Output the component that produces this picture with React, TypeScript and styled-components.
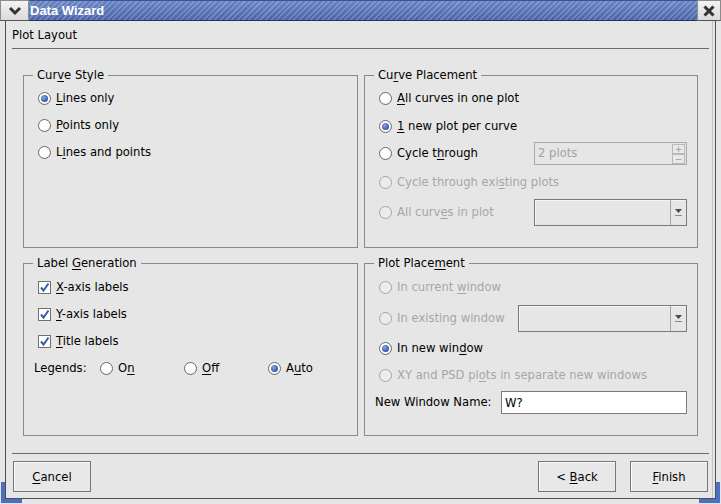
import React from 'react';
import styled, { createGlobalStyle } from 'styled-components';

const Global = createGlobalStyle`
  html, body { margin: 0; padding: 0; background: #e6e6e6; }
  body {
    font-family: "DejaVu Sans", "Bitstream Vera Sans", sans-serif;
    font-size: 11.6px;
    color: #000;
  }
  #root { width: 721px; height: 504px; }
  u { text-underline-offset: 2px; }
`;

const Window = styled.div`
  position: relative;
  width: 721px;
  height: 504px;
  display: flex;
  flex-direction: column;
  background: #e6e6e6;
  overflow: hidden;
`;

const TitleBar = styled.div`
  display: flex;
  height: 21px;
  flex: none;
`;

const TitleButton = styled.div<{ $w: number }>`
  width: ${p => p.$w}px;
  box-sizing: border-box;
  display: flex;
  align-items: center;
  justify-content: center;
  background: linear-gradient(#f3f3f3, #dadada);
  border: 1px solid #8c8c8c;
  border-bottom-color: #555;
`;

const TitleStripe = styled.div`
  flex: 1;
  display: flex;
  align-items: center;
  box-sizing: border-box;
  padding-left: 1px;
  color: #fff;
  font-family: "Liberation Sans", Arial, sans-serif;
  font-weight: bold;
  font-size: 13px;
  background:
    repeating-linear-gradient(135deg, rgba(255,255,255,0.2) 0 1.5px, rgba(255,255,255,0) 1.5px 4px),
    linear-gradient(#6a85c4, #4964a9);
  border-top: 1px solid #3b5391;
  border-bottom: 1px solid #22345f;
`;

const Frame = styled.div`
  flex: 1;
  display: flex;
  min-height: 0;
  padding: 0 5px 5px 5px;
`;

const Client = styled.div`
  flex: 1;
  display: flex;
  flex-direction: column;
  border: 1px solid #4f4f4f;
  border-top: none;
  box-shadow: inset -2px 0 0 #e6e6e6, inset -3px 0 0 #c4c4c4;
`;

const PageTitle = styled.div`
  margin: 7px 0 0 6px;
  line-height: 15px;
  height: 15px;
`;

const Separator = styled.div<{ $mt: number }>`
  margin: ${p => p.$mt}px 6px 0 6px;
  height: 1px;
  background: #6b6b6b;
  flex: none;
`;

const GroupsGrid = styled.div`
  margin: 26px 17px 0 17px;
  display: grid;
  grid-template-columns: 335px 334px;
  grid-template-rows: 173px 173px;
  column-gap: 6px;
  row-gap: 15px;
`;

const Group = styled.div`
  border: 1px solid #8a8a8a;
  display: flex;
  flex-direction: column;
  min-width: 0;
`;

const GroupTitle = styled.div`
  align-self: flex-start;
  margin: -8px 0 0 9px;
  padding: 0 4px;
  height: 15px;
  line-height: 15px;
  background: #e6e6e6;
`;

const Rows = styled.div<{ $pt: number }>`
  display: flex;
  flex-direction: column;
  padding-top: ${p => p.$pt}px;
`;

const Row = styled.div<{ $h: number; $pl?: number }>`
  display: flex;
  align-items: center;
  height: ${p => p.$h}px;
  padding-left: ${p => p.$pl ?? 14}px;
  padding-right: 10px;
`;

const Option = styled.div<{ $disabled?: boolean }>`
  display: flex;
  align-items: center;
  gap: 5px;
  line-height: 15px;
  white-space: nowrap;
  color: ${p => (p.$disabled ? '#a6a6a6' : '#000')};
`;

const RadioDot = styled.span<{ $checked?: boolean; $disabled?: boolean }>`
  flex: none;
  width: 13px;
  height: 13px;
  box-sizing: border-box;
  border-radius: 50%;
  border: 1px solid ${p => (p.$disabled ? '#a4a4a4' : '#6a6a6a')};
  background: ${p => (p.$disabled ? '#ececec' : 'radial-gradient(circle at 40% 35%, #ffffff 55%, #e2e2e2)')};
  display: flex;
  align-items: center;
  justify-content: center;
  &::after {
    content: '';
    display: ${p => (p.$checked ? 'block' : 'none')};
    width: 7px;
    height: 7px;
    border-radius: 50%;
    background: radial-gradient(circle at 38% 35%, #8ba6e6, #3556a8 70%, #22408a);
  }
`;

const CheckBox = styled.span`
  flex: none;
  width: 13px;
  height: 13px;
  box-sizing: border-box;
  border: 1px solid #707070;
  background: #fff;
  display: flex;
  align-items: center;
  justify-content: center;
`;

const LegendRow = styled.div`
  display: grid;
  grid-template-columns: 66px 84px 84px auto;
  align-items: center;
  height: 27px;
  padding-left: 10px;
`;

const FieldLabel = styled.span`
  line-height: 15px;
  white-space: nowrap;
`;

const SpinBox = styled.div`
  margin-left: auto;
  width: 153px;
  height: 23px;
  box-sizing: border-box;
  border: 1px solid #a9a9a9;
  background: #e6e6e6;
  display: flex;
  align-items: stretch;
`;

const SpinText = styled.div`
  flex: 1;
  padding-left: 3px;
  line-height: 21px;
  color: #a3a3a3;
`;

const SpinButtons = styled.div`
  width: 13px;
  display: flex;
  flex-direction: column;
  margin: 1px 1px 1px 0;
`;

const SpinButton = styled.div`
  flex: 1;
  box-sizing: border-box;
  border: 1px solid #b8b8b8;
  background: #e9e9e9;
  color: #9a9a9a;
  font-size: 9px;
  line-height: 8px;
  text-align: center;
`;

const Combo = styled.div<{ $w: number }>`
  margin-left: auto;
  width: ${p => p.$w}px;
  height: 27px;
  box-sizing: border-box;
  border: 1px solid #7a7a7a;
  background: #e6e6e6;
  display: flex;
  box-shadow: inset 1px 1px 0 #f4f4f4;
`;

const ComboField = styled.div`
  flex: 1;
`;

const ComboButton = styled.div`
  width: 15px;
  border-left: 1px solid #a5a5a5;
  display: flex;
  align-items: center;
  justify-content: center;
`;

const TextField = styled.input`
  margin-left: auto;
  width: 186px;
  height: 23px;
  box-sizing: border-box;
  border: 1px solid #7a7a7a;
  background: #fff;
  padding: 0 0 0 3px;
  font-family: "DejaVu Sans", sans-serif;
  font-size: 11.6px;
  color: #000;
  outline: none;
`;

const ButtonRow = styled.div`
  margin-top: 7px;
  height: 31px;
  display: flex;
  gap: 14px;
  padding: 0 7px;
  flex: none;
`;

const Button = styled.button<{ $push?: boolean }>`
  width: 78px;
  height: 31px;
  box-sizing: border-box;
  border: 1px solid #777;
  background: #e8e8e8;
  box-shadow: inset 1px 1px 0 #fafafa;
  font-family: "DejaVu Sans", sans-serif;
  font-size: 11.6px;
  color: #000;
  padding: 0;
  margin-left: ${p => (p.$push ? 'auto' : '0')};
`;

const Corner = styled.div<{ $side: 'left' | 'right' }>`
  position: absolute;
  bottom: 1px;
  ${p => p.$side}: 1px;
  width: 21px;
  height: 21px;
  box-sizing: border-box;
  border-bottom: 4px solid #4d6fc2;
  ${p => (p.$side === 'left' ? 'border-left' : 'border-right')}: 4px solid #4d6fc2;
`;

const Chevron = () => (
  <svg width="14" height="10" viewBox="0 0 14 10">
    <path d="M2 2 L7 7 L12 2" fill="none" stroke="#333" strokeWidth="3" />
  </svg>
);

const CloseX = () => (
  <svg width="12" height="12" viewBox="0 0 12 12">
    <path d="M1.5 1.5 L10.5 10.5 M10.5 1.5 L1.5 10.5" fill="none" stroke="#333" strokeWidth="3" />
  </svg>
);

const Check = () => (
  <svg width="11" height="11" viewBox="0 0 11 11">
    <path d="M2 5.5 L4.5 8.5 L9.5 1.5" fill="none" stroke="#3a5cae" strokeWidth="2" />
  </svg>
);

const ComboArrow = () => (
  <svg width="7" height="9" viewBox="0 0 7 9">
    <polygon points="0,1 7,1 3.5,5" fill="#4a4a4a" />
    <rect x="0" y="7" width="7" height="1" fill="#8a8a8a" />
  </svg>
);

const Radio = ({ checked, disabled, children }: { checked?: boolean; disabled?: boolean; children: React.ReactNode }) => (
  <Option $disabled={disabled}>
    <RadioDot $checked={checked} $disabled={disabled} />
    <span>{children}</span>
  </Option>
);

const Checked = ({ children }: { children: React.ReactNode }) => (
  <Option>
    <CheckBox>
      <Check />
    </CheckBox>
    <span>{children}</span>
  </Option>
);

export default function App() {
  return (
    <>
      <Global />
      <Window>
        <TitleBar>
          <TitleButton $w={29}>
            <Chevron />
          </TitleButton>
          <TitleStripe>Data Wizard</TitleStripe>
          <TitleButton $w={24}>
            <CloseX />
          </TitleButton>
        </TitleBar>
        <Frame>
          <Client>
            <PageTitle>Plot Layout</PageTitle>
            <Separator $mt={5} />
            <GroupsGrid>
              <Group>
                <GroupTitle>Cur<u>v</u>e Style</GroupTitle>
                <Rows $pt={2}>
                  <Row $h={27}><Radio checked><u>L</u>ines only</Radio></Row>
                  <Row $h={27}><Radio><u>P</u>oints only</Radio></Row>
                  <Row $h={27}><Radio>L<u>i</u>nes and points</Radio></Row>
                </Rows>
              </Group>
              <Group>
                <GroupTitle>Cu<u>r</u>ve Placement</GroupTitle>
                <Rows $pt={2}>
                  <Row $h={27}><Radio><u>A</u>ll curves in one plot</Radio></Row>
                  <Row $h={28}><Radio checked><u>1</u> new plot per curve</Radio></Row>
                  <Row $h={27}>
                    <Radio>Cycle t<u>h</u>rough</Radio>
                    <SpinBox>
                      <SpinText>2 plots</SpinText>
                      <SpinButtons>
                        <SpinButton>+</SpinButton>
                        <SpinButton>−</SpinButton>
                      </SpinButtons>
                    </SpinBox>
                  </Row>
                  <Row $h={30}><Radio disabled>Cycle through exi<u>s</u>ting plots</Radio></Row>
                  <Row $h={30}>
                    <Radio disabled>All curv<u>e</u>s in plot</Radio>
                    <Combo $w={153}>
                      <ComboField />
                      <ComboButton><ComboArrow /></ComboButton>
                    </Combo>
                  </Row>
                </Rows>
              </Group>
              <Group>
                <GroupTitle>Label <u>G</u>eneration</GroupTitle>
                <Rows $pt={3}>
                  <Row $h={27}><Checked><u>X</u>-axis labels</Checked></Row>
                  <Row $h={27}><Checked><u>Y</u>-axis labels</Checked></Row>
                  <Row $h={27}><Checked><u>T</u>itle labels</Checked></Row>
                  <LegendRow>
                    <FieldLabel>Legends:</FieldLabel>
                    <Radio>O<u>n</u></Radio>
                    <Radio><u>O</u>ff</Radio>
                    <Radio checked>A<u>u</u>to</Radio>
                  </LegendRow>
                </Rows>
              </Group>
              <Group>
                <GroupTitle>Plot Place<u>m</u>ent</GroupTitle>
                <Rows $pt={3}>
                  <Row $h={27}><Radio disabled>In current <u>w</u>indow</Radio></Row>
                  <Row $h={34}>
                    <Radio disabled>In existing window</Radio>
                    <Combo $w={169}>
                      <ComboField />
                      <ComboButton><ComboArrow /></ComboButton>
                    </Combo>
                  </Row>
                  <Row $h={27}><Radio checked>In new win<u>d</u>ow</Radio></Row>
                  <Row $h={27}><Radio disabled>XY and PSD pl<u>o</u>ts in separate new windows</Radio></Row>
                  <Row $h={27} $pl={10}>
                    <FieldLabel>New Window Name:</FieldLabel>
                    <TextField defaultValue="W?" readOnly />
                  </Row>
                </Rows>
              </Group>
            </GroupsGrid>
            <Separator $mt={17} />
            <ButtonRow>
              <Button><u>C</u>ancel</Button>
              <Button $push>&lt; <u>B</u>ack</Button>
              <Button><u>F</u>inish</Button>
            </ButtonRow>
          </Client>
        </Frame>
        <Corner $side="left" />
        <Corner $side="right" />
      </Window>
    </>
  );
}
